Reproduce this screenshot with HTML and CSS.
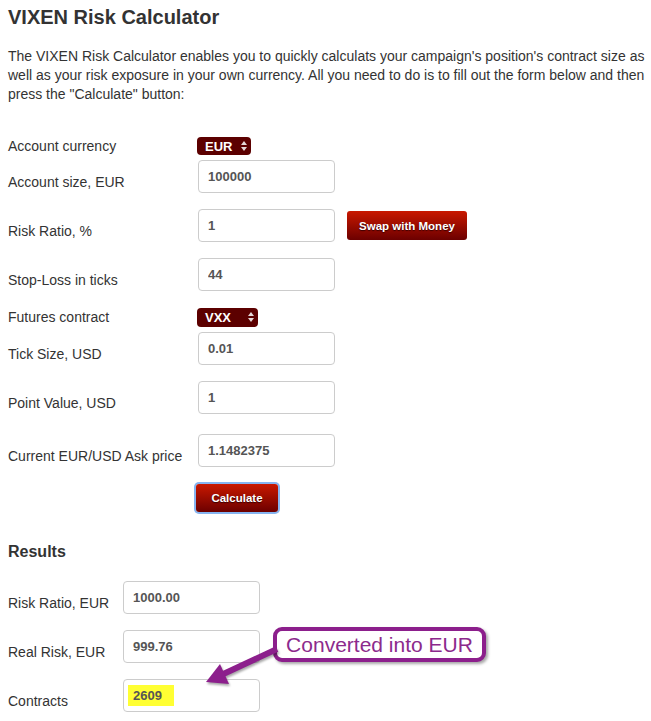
FILE: index.html
```html
<!DOCTYPE html>
<html lang="en">
  <head>
    <meta charset="UTF-8" />
    <meta name="viewport" content="width=device-width, initial-scale=1.0" />
    <title>VIXEN Risk Calculator</title>
    <link rel="stylesheet" href="styles.css">
  </head>
  <body>
    <div class="page">
      <h1>VIXEN Risk Calculator</h1>
      <p class="intro">
        The VIXEN Risk Calculator enables you to quickly calculats your campaign's position's contract size as
        well as your risk exposure in your own currency. All you need to do is to fill out the form below and then
        press the "Calculate" button:
      </p>

      <form class="calc">
        <div class="field field-select field-first">
          <label>Account currency</label>
          <span class="select select-eur">EUR
            <svg class="arrows" width="6" height="10" viewBox="0 0 6 10"><polygon points="0,4 3,0 6,4" /><polygon points="0,6 3,10 6,6" /></svg>
          </span>
        </div>
        <div class="field">
          <label for="size">Account size, EUR</label>
          <input type="text" id="size" value="100000" />
        </div>
        <div class="field">
          <label for="ratio">Risk Ratio, %</label>
          <input type="text" id="ratio" value="1" />
          <button type="button" class="btn btn-swap">Swap with Money</button>
        </div>
        <div class="field">
          <label for="stop">Stop-Loss in ticks</label>
          <input type="text" id="stop" value="44" />
        </div>
        <div class="field field-select">
          <label>Futures contract</label>
          <span class="select select-vxx">VXX
            <svg class="arrows" width="6" height="10" viewBox="0 0 6 10"><polygon points="0,4 3,0 6,4" /><polygon points="0,6 3,10 6,6" /></svg>
          </span>
        </div>
        <div class="field">
          <label for="tick">Tick Size, USD</label>
          <input type="text" id="tick" value="0.01" />
        </div>
        <div class="field field-point">
          <label for="point">Point Value, USD</label>
          <input type="text" id="point" value="1" />
        </div>
        <div class="field field-last">
          <label for="ask">Current EUR/USD Ask price</label>
          <input type="text" id="ask" value="1.1482375" />
        </div>
        <div class="actions">
          <button type="button" class="btn btn-calc">Calculate</button>
        </div>
      </form>

      <h2>Results</h2>
      <div class="results">
        <div class="field">
          <label>Risk Ratio, EUR</label>
          <div class="box">1000.00</div>
        </div>
        <div class="field">
          <label>Real Risk, EUR</label>
          <div class="box">999.76</div>
        </div>
        <div class="field">
          <label>Contracts</label>
          <div class="box"><span class="mark">2609</span></div>
        </div>
      </div>

      <!-- annotation -->
      <div class="callout">Converted into EUR</div>
      <svg class="arrow" width="90" height="60" viewBox="200 635 90 60">
        <line x1="277" y1="649" x2="219" y2="676" stroke="#8c1f8c" stroke-width="6" />
        <polygon points="206,682 220,664 229,684" fill="#8c1f8c" />
      </svg>
    </div>
  </body>
</html>
```

FILE: styles.css
```css
body {
  font-family: "Liberation Sans", Arial, sans-serif;
  color: #333;
  background-color: #fff;
  margin: 0;
  padding: 0 4px 0 8px;
}
.page {
  position: relative;
}
h1 {
  margin: 0;
  padding-top: 5px;
  font-size: 20px;
  line-height: 24px;
  color: #333;
}
.intro {
  margin: 18px 0 0;
  font-size: 14px;
  line-height: 19px;
  color: #333;
}
.calc {
  margin-top: 32px;
}
.field {
  display: flex;
  align-items: flex-start;
  margin-bottom: 16px;
}
.field label {
  width: 190px;
  flex-shrink: 0;
  padding-top: 12px;
  font-size: 14px;
  line-height: 20px;
  color: #333;
}
.field input,
.box {
  box-sizing: border-box;
  width: 137px;
  height: 33px;
  padding: 0 9px;
  border: 1px solid #ccc;
  border-radius: 4px;
  font-family: "Liberation Sans", Arial, sans-serif;
  font-size: 13px;
  font-weight: bold;
  color: #555;
  background-color: #fff;
}
.field-select {
  align-items: center;
  margin-bottom: 5px;
}
.field-first {
  margin-bottom: 4px;
}
.field-select label {
  padding-top: 0;
  margin-right: -1px;
}
.field-point {
  margin-bottom: 20px;
}
.field-last {
  margin-bottom: 17px;
}
.select {
  display: flex;
  align-items: center;
  justify-content: space-between;
  box-sizing: border-box;
  height: 18px;
  padding: 0 4px 0 8px;
  border-radius: 4px;
  background-color: #5c0000;
  color: #fff;
  font-size: 13px;
  font-weight: bold;
}
.select-eur {
  width: 54px;
}
.select-vxx {
  width: 61px;
  height: 19px;
}
.arrows {
  fill: #e6d8d8;
}
.btn {
  border: none;
  border-radius: 3px;
  background: linear-gradient(#c91800, #6c0000);
  color: #fff;
  font-family: "Liberation Sans", Arial, sans-serif;
  font-size: 11.5px;
  font-weight: bold;
  text-shadow: 0 1px 1px #3a0000;
  cursor: pointer;
}
.btn-swap {
  width: 120px;
  height: 29px;
  margin: 2px 0 0 12px;
}
.actions {
  padding-left: 188px;
}
.btn-calc {
  width: 82px;
  height: 28px;
  box-shadow: 0 0 0 2px #86b4f0;
}
h2 {
  margin: 30px 0 0;
  font-size: 16px;
  line-height: 20px;
  color: #333;
}
.results {
  margin-top: 19px;
}
.results .field label {
  width: 115px;
}
.box {
  display: flex;
  align-items: center;
}
.mark {
  margin-left: -5px;
  padding: 3px 12px 3px 5px;
  background-color: #ffff33;
}
/* annotation */
.callout {
  position: absolute;
  left: 265px;
  top: 627px;
  box-sizing: border-box;
  width: 213px;
  height: 35px;
  border: 4px solid #8c1f8c;
  border-radius: 9px;
  background-color: #fff;
  box-shadow: 2px 2px 3px rgba(0, 0, 0, 0.35);
  color: #8c2a8c;
  font-size: 21px;
  line-height: 27px;
  text-align: center;
}
.arrow {
  position: absolute;
  left: 192px;
  top: 635px;
  filter: drop-shadow(1px 2px 1px rgba(0, 0, 0, 0.35));
}
```
